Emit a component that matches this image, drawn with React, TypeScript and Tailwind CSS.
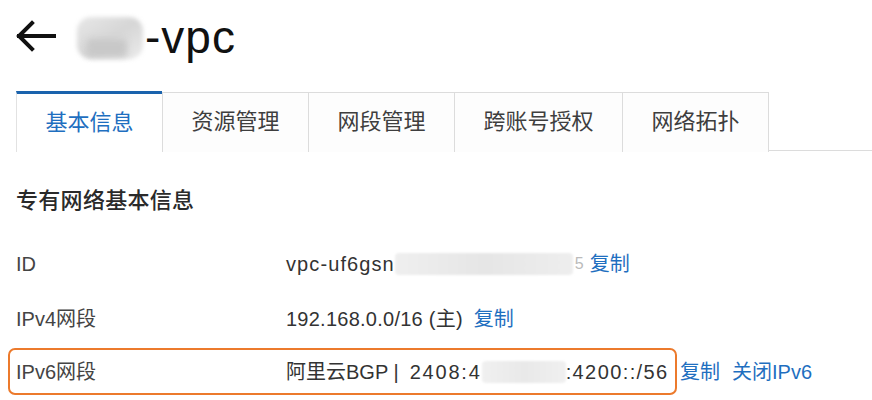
import React from "react";

const font = { fontFamily: '"Liberation Sans", "Noto Sans CJK SC", sans-serif' };

function Blur({ className }: { className: string }) {
  return <span className={`inline-block align-middle rounded-sm ${className}`} />;
}

export default function App() {
  const tabs = ["基本信息", "资源管理", "网段管理", "跨账号授权", "网络拓扑"];
  return (
    <div className="w-[872px] h-[400px] bg-white overflow-hidden text-[#333]" style={font}>
      {/* header */}
      <div className="flex items-center h-[70px] pl-[15px] pt-[1px]">
        <svg width="41" height="32" viewBox="0 0 41 32" className="shrink-0">
          <path d="M39 16H4M17 3L4 16l13 13" fill="none" stroke="#111" strokeWidth="4" strokeLinecap="square" strokeLinejoin="miter" />
        </svg>
        <div className="relative ml-[19px] w-[70px] h-[44px] mt-[6px]">
          <div className="absolute left-[2px] top-[0px] w-[66px] h-[42px] rounded-[14px] bg-gradient-to-br from-[#e8e8e8] via-[#d6d6d6] to-[#ececec] blur-[2px]" />
          <div className="absolute left-[12px] top-[22px] w-[40px] h-[18px] bg-[#c8c8c8] blur-[3px] rounded" />
        </div>
        <span className="text-[46px] leading-none text-[#111] mt-[2px] tracking-[1px]">-vpc</span>
      </div>

      {/* tabs */}
      <div className="flex ml-[16px] mt-[21px] border-b border-[#dcdcdc] h-[60px]">
        {tabs.map((t, i) => (
          <div
            key={t}
            className={
              i === 0
                ? "h-[61px] px-[28.5px] flex items-center text-[22px] text-[#1f6fc0] border-t-[3px] border-t-[#1a63ad] border-l border-l-[#e2e2e2] bg-white"
                : "h-[60px] px-[28.5px] flex items-center text-[22px] text-[#3e3e3e] border-t border-r border-[#dcdcdc] mt-[1px] -mb-px bg-[#fdfdfd]"
            }
            style={i === 1 ? { borderLeftWidth: 1, borderLeftColor: "#dcdcdc" } : undefined}
          >
            <span className="pb-[2px]">{t}</span>
          </div>
        ))}
      </div>

      {/* section */}
      <div className="pl-[16px] pt-[39px] text-[22px] font-medium text-[#2a2a2a] leading-none tracking-[0.3px]">专有网络基本信息</div>

      <div className="mt-[40px] flex flex-col text-[20px] leading-none">
        <div className="flex items-center h-[24px] pl-[16px]">
          <span className="w-[270px] text-[#444]">ID</span>
          <span className="text-[#333] tracking-[1.1px]">vpc-uf6gsn</span>
          <Blur className="w-[178px] h-[22px] bg-gradient-to-r from-[#efefef] via-[#e6e6e6] to-[#eeeeee] blur-[1px]" />
          <span className="text-[#bbb] ml-[2px] text-[16px]">5</span>
          <span className="text-[#1f6fc0] ml-[6px]">复制</span>
        </div>

        <div className="flex items-center h-[24px] pl-[16px] mt-[31px]">
          <span className="w-[270px] text-[#444]">IPv4网段</span>
          <span className="text-[#333] tracking-[0.25px]">192.168.0.0/16 (主)</span>
          <span className="text-[#1f6fc0] ml-[11px]">复制</span>
        </div>

        <div className="flex items-center mt-[17px] pl-[8px]">
          <div className="flex items-center h-[47px] border-2 border-[#ec7a2c] rounded-[7px] pl-[6px] pr-[6px] w-[669px]">
            <span className="w-[270px] text-[#444]">IPv6网段</span>
            <span className="text-[#333]">阿里云BGP |</span>
            <span className="text-[#333] tracking-[1.8px] ml-[11px]">2408:4</span>
            <Blur className="w-[84px] h-[22px] bg-gradient-to-r from-[#f0f0f0] via-[#e9e9e9] to-[#f0f0f0] blur-[1px]" />
            <span className="text-[#333] tracking-[1.4px]">:4200::/56</span>
          </div>
          <span className="text-[#1f6fc0] ml-[3px]">复制</span>
          <span className="text-[#1f6fc0] ml-[12px]">关闭IPv6</span>
        </div>
      </div>
    </div>
  );
}
